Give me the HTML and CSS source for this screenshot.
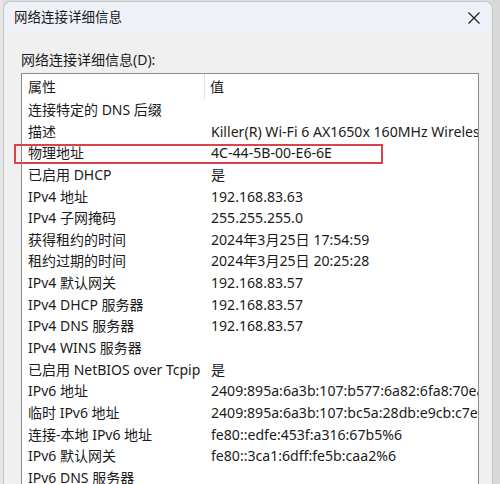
FILE: index.html
```html
<!DOCTYPE html>
<html lang="zh-CN">
<head>
<meta charset="utf-8">
<title>网络连接详细信息</title>
<link rel="stylesheet" href="styles.css">
</head>
<body>
<div class="screen">
  <div class="window">
    <div class="titlebar">
      <span class="title">网络连接详细信息</span>
      <svg class="close" width="14" height="14" viewBox="0 0 14 14" aria-hidden="true">
        <path d="M1.5 1.5 L12.5 12.5 M12.5 1.5 L1.5 12.5" stroke="#1f1f1f" stroke-width="1.2" fill="none"/>
      </svg>
    </div>
    <div class="content">
      <div class="label">网络连接详细信息(D):</div>
      <div class="listbox">
        <div class="header">
          <div class="col1 hcell">属性</div>
          <div class="col2 hcell">值</div>
        </div>
        <div class="row"><div class="col1">连接特定的 DNS 后缀</div><div class="col2"></div></div>
        <div class="row"><div class="col1">描述</div><div class="col2">Killer(R) Wi-Fi 6 AX1650x 160MHz Wireless Network Adapter (201NGW)</div></div>
        <div class="row"><div class="col1">物理地址</div><div class="col2">4C-44-5B-00-E6-6E</div></div>
        <div class="row"><div class="col1">已启用 DHCP</div><div class="col2">是</div></div>
        <div class="row"><div class="col1">IPv4 地址</div><div class="col2">192.168.83.63</div></div>
        <div class="row"><div class="col1">IPv4 子网掩码</div><div class="col2">255.255.255.0</div></div>
        <div class="row"><div class="col1">获得租约的时间</div><div class="col2">2024年3月25日 17:54:59</div></div>
        <div class="row"><div class="col1">租约过期的时间</div><div class="col2">2024年3月25日 20:25:28</div></div>
        <div class="row"><div class="col1">IPv4 默认网关</div><div class="col2">192.168.83.57</div></div>
        <div class="row"><div class="col1">IPv4 DHCP 服务器</div><div class="col2">192.168.83.57</div></div>
        <div class="row"><div class="col1">IPv4 DNS 服务器</div><div class="col2">192.168.83.57</div></div>
        <div class="row"><div class="col1">IPv4 WINS 服务器</div><div class="col2"></div></div>
        <div class="row"><div class="col1 wide">已启用 NetBIOS over Tcpip</div><div class="col2">是</div></div>
        <div class="row"><div class="col1">IPv6 地址</div><div class="col2">2409:895a:6a3b:107:b577:6a82:6fa8:70ea</div></div>
        <div class="row"><div class="col1">临时 IPv6 地址</div><div class="col2">2409:895a:6a3b:107:bc5a:28db:e9cb:c7e1</div></div>
        <div class="row"><div class="col1">连接-本地 IPv6 地址</div><div class="col2">fe80::edfe:453f:a316:67b5%6</div></div>
        <div class="row"><div class="col1">IPv6 默认网关</div><div class="col2">fe80::3ca1:6dff:fe5b:caa2%6</div></div>
        <div class="row"><div class="col1">IPv6 DNS 服务器</div><div class="col2"></div></div>
      </div>
    </div>
  </div>
  <div class="highlight"></div>
</div>
</body>
</html>
```
FILE: styles.css
```css
* { box-sizing: border-box; }
html, body {
  margin: 0;
  padding: 0;
  width: 500px;
  height: 484px;
  overflow: hidden;
  background: #dcdcdc;
  font-family: "Noto Sans", "Noto Sans CJK SC", sans-serif;
  font-size: 14px;
  color: #1b1b1b;
}
.screen {
  position: relative;
  width: 500px;
  height: 484px;
  overflow: hidden;
  padding: 1px 0 0 3px;
  background: linear-gradient(to right, #e6e6e6 0, #e6e6e6 3px, transparent 3px),
              linear-gradient(to right, transparent 493px, #d9d9d9 493px);
}
.window {
  width: 490px;
  height: 520px;
  background: #f0f0f0;
  border: 1px solid #c4c4c4;
  border-bottom: none;
  border-radius: 8px 8px 0 0;
  overflow: hidden;
}
.titlebar {
  height: 31px;
  background: #eef2f8;
  display: flex;
  align-items: center;
  justify-content: space-between;
  padding: 0 11px 0 10px;
}
.title {
  font-size: 13.5px;
  line-height: 20px;
  margin-top: -1px;
}
.close {
  display: block;
}
.content {
  padding: 17px 0 0 17px;
}
.label {
  line-height: 20px;
  height: 20px;
}
.listbox {
  margin-top: 3px;
  width: 458px;
  background: #ffffff;
  border: 1px solid #8c8c8c;
  border-bottom: none;
  overflow: hidden;
}
.header {
  display: flex;
  height: 25px;
  align-items: stretch;
}
.hcell {
  line-height: 25px;
}
.header .col1 {
  border-right: 1px solid #e3e3e3;
}
.row {
  display: flex;
  height: 21.65px;
  line-height: 21.65px;
}
.col1 {
  flex: 0 0 183px;
  width: 183px;
  padding-left: 6px;
  white-space: nowrap;
}
.col2 {
  flex: 1 1 auto;
  min-width: 0;
  padding-left: 6px;
  white-space: nowrap;
  overflow: hidden;
  font-size: 14.1px;
}
.header .col2 {
  padding-left: 5px;
  font-size: 14px;
}
.highlight {
  position: absolute;
  left: 14px;
  top: 144px;
  width: 369px;
  height: 20px;
  border: 2px solid #d9434b;
}
```
